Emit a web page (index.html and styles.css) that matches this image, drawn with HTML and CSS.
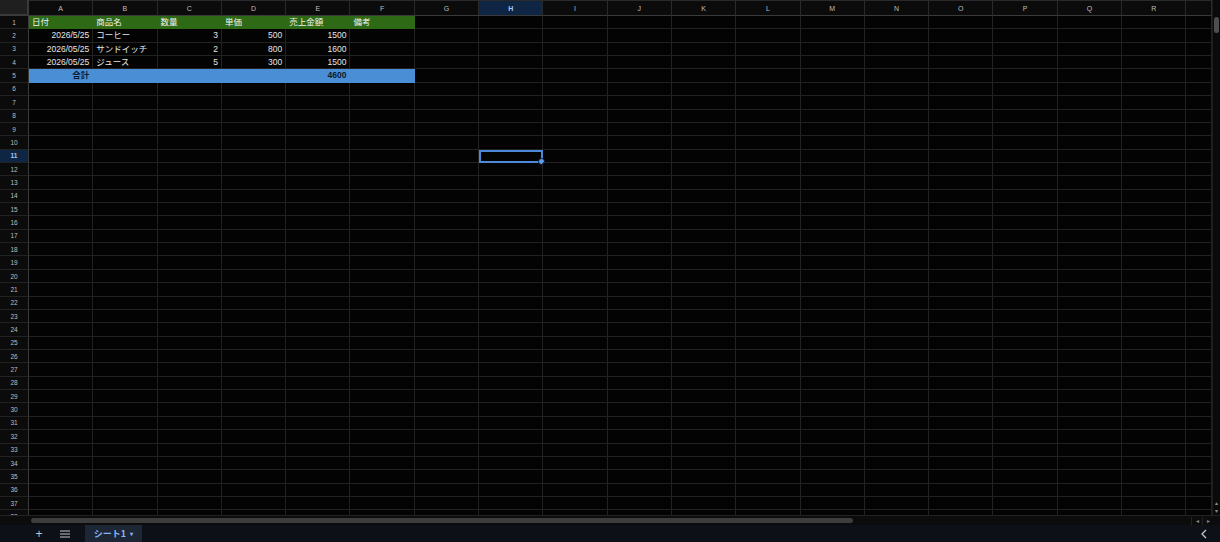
FILE: index.html
```html
<!DOCTYPE html>
<html lang="ja">
<head>
  <meta charset="UTF-8">
  <meta name="viewport" content="width=device-width, initial-scale=1.0">
  <title>シート1</title>
  <link rel="stylesheet" href="styles.css">
</head>
<body>

<div id="sheet">
  <div class="gridArea">
    <div id="grid" class="grid"></div>
    <div class="vscroll">
      <div class="vthumb"></div>
      <div class="varrows">
        <span class="arrow">&#9652;</span>
        <span class="arrow">&#9662;</span>
      </div>
    </div>
  </div>
  <div class="hscroll">
    <div class="htrack"><div class="hthumb"></div></div>
    <div class="harrows">
      <span class="harrow">&#9666;</span>
      <span class="harrow">&#9656;</span>
    </div>
  </div>
  <div class="tabBar">
    <span class="tabIcon">+</span>
    <span class="tabIcon menu">
      <svg width="10" height="8" viewBox="0 0 10 8"><path d="M0 1h10M0 4h10M0 7h10" stroke="#c4c7c5" stroke-width="1.2"/></svg>
    </span>
    <div class="tab">シート1 <span class="caret">&#9662;</span></div>
    <span class="collapse">
      <svg width="6" height="10" viewBox="0 0 6 10"><path d="M5 1L1 5l4 4" fill="none" stroke="#c4c7c5" stroke-width="1.3"/></svg>
    </span>
  </div>
</div>

<script>
  const grid = document.getElementById("grid");
  const letters = "ABCDEFGHIJKLMNOPQRS".split("");
  const rowCount = 38;

  // cell contents: [text, align]
  const data = {
    1: [["日付"], ["商品名"], ["数量"], ["単価"], ["売上金額"], ["備考"]],
    2: [["2026/5/25", "r"], ["コーヒー"], ["3", "r"], ["500", "r"], ["1500", "r"], [""]],
    3: [["2026/05/25", "r"], ["サンドイッチ"], ["2", "r"], ["800", "r"], ["1600", "r"], [""]],
    4: [["2026/05/25", "r"], ["ジュース"], ["5", "r"], ["300", "r"], ["1500", "r"], [""]],
    5: [["合計", "r"], [""], [""], [""], ["4600", "r"], [""]]
  };

  function addCell(cls, text) {
    const el = document.createElement("div");
    el.className = cls;
    if (text) el.textContent = text;
    grid.appendChild(el);
    return el;
  }

  // header row
  addCell("corner");
  letters.forEach((l) => {
    addCell(l === "H" ? "colHead active" : "colHead", l === "S" ? "" : l);
  });

  for (let r = 1; r <= rowCount; r++) {
    addCell(r === 11 ? "rowHead active" : "rowHead", String(r));
    letters.forEach((l, c) => {
      let cls = "cell";
      let text = "";
      if (r === 1 && c < 6) cls += " green";
      if (r === 5 && c < 6) cls += " blue";
      const row = data[r];
      if (row && row[c]) {
        text = row[c][0];
        if (row[c][1] === "r") cls += " right";
      }
      const cell = addCell(cls, text);
      if (r === 11 && l === "H") {
        cell.classList.add("selected");
        const handle = document.createElement("span");
        handle.className = "handle";
        cell.appendChild(handle);
      }
    });
  }
</script>

</body>
</html>
```

FILE: styles.css
```css
html, body {
  margin: 0;
  padding: 0;
  background-color: #000;
  overflow: hidden;
}

body {
  font-family: "Liberation Sans", Arial, "Noto Sans CJK JP", sans-serif;
  width: 1220px;
  height: 542px;
}

#sheet {
  display: flex;
  flex-direction: column;
  height: 542px;
}

.gridArea {
  display: flex;
  height: 515px;
  overflow: hidden;
}

.grid {
  flex: 1;
  display: grid;
  grid-template-columns: 29px repeat(18, 64.3px) 1fr;
  grid-template-rows: 16px repeat(38, 13.37px);
  background-color: #030303;
  overflow: hidden;
}

.corner {
  background-color: #1f1f1f;
  border-right: 2px solid #3a3a3a;
  border-bottom: 2px solid #3a3a3a;
  box-sizing: border-box;
}

.colHead {
  background-color: #0b0b0b;
  color: #bfbfbf;
  font-size: 7px;
  display: flex;
  align-items: center;
  justify-content: center;
  border-right: 1px solid #2a2a2a;
  border-bottom: 1px solid #3a3a3a;
  border-top: 1px solid #2a2a2a;
  box-sizing: border-box;
}

.rowHead {
  background-color: #0b0b0b;
  color: #bfbfbf;
  font-size: 6.5px;
  display: flex;
  align-items: center;
  justify-content: center;
  border-right: 1px solid #3a3a3a;
  border-bottom: 1px solid #222;
  box-sizing: border-box;
}

.colHead.active,
.rowHead.active {
  background-color: #0e2544;
  color: #a8c7fa;
  font-weight: bold;
}

.cell {
  position: relative;
  border-right: 1px solid #222;
  border-bottom: 1px solid #222;
  box-sizing: border-box;
  color: #e6e6e6;
  font-size: 8.5px;
  line-height: 12px;
  padding: 0 3px;
  white-space: nowrap;
  overflow: hidden;
}

.cell.right {
  text-align: right;
}

.cell.green {
  background-color: #2e6a15;
  border-color: #2e6a15;
  color: #f2f2f2;
}

.cell.blue {
  background-color: #4a8fd6;
  border-color: #4a8fd6;
  color: #0b1a30;
  font-weight: bold;
  overflow: visible;
}

.cell.selected {
  border: 2px solid #4e88d8;
  overflow: visible;
}

.handle {
  position: absolute;
  right: -4px;
  bottom: -4px;
  width: 5px;
  height: 5px;
  border-radius: 50%;
  background-color: #5a9cf0;
  border: 1px solid #0a1a30;
}

.vscroll {
  width: 7px;
  background-color: #0a0a0a;
  border-left: 1px solid #1c1c1c;
  display: flex;
  flex-direction: column;
  justify-content: space-between;
  align-items: center;
  padding-top: 17px;
}

.vthumb {
  width: 5px;
  height: 16px;
  border-radius: 3px;
  background-color: #4e4e4e;
}

.varrows {
  display: flex;
  flex-direction: column;
  color: #8a8a8a;
  font-size: 6px;
  line-height: 8px;
}

.hscroll {
  height: 9px;
  display: flex;
  align-items: center;
  background-color: #0c0c0c;
  border-top: 1px solid #222;
}

.htrack {
  flex: 1;
  padding-left: 31px;
}

.hthumb {
  width: 822px;
  height: 5px;
  border-radius: 3px;
  background-color: #3d3d3d;
}

.harrows {
  display: flex;
  margin-right: 7px;
}

.harrow {
  width: 10px;
  height: 8px;
  color: #8a8a8a;
  font-size: 6px;
  line-height: 8px;
  text-align: center;
  border-left: 1px solid #222;
}

.tabBar {
  flex: 1;
  display: flex;
  align-items: stretch;
  background-color: #0d1016;
  color: #c4c7c5;
}

.tabIcon {
  display: flex;
  align-items: center;
  justify-content: center;
  width: 20px;
  font-size: 12px;
}

.tabIcon:first-child {
  margin-left: 29px;
}

.menu {
  margin-left: 6px;
}

.tab {
  margin-left: 10px;
  width: 57px;
  display: flex;
  align-items: center;
  justify-content: center;
  gap: 4px;
  background-color: #1c2634;
  color: #8ab4f8;
  font-family: "Noto Sans CJK JP", sans-serif;
  font-size: 9px;
  font-weight: bold;
}

.caret {
  font-size: 6px;
}

.collapse {
  margin-left: auto;
  margin-right: 13px;
  display: flex;
  align-items: center;
}
```
